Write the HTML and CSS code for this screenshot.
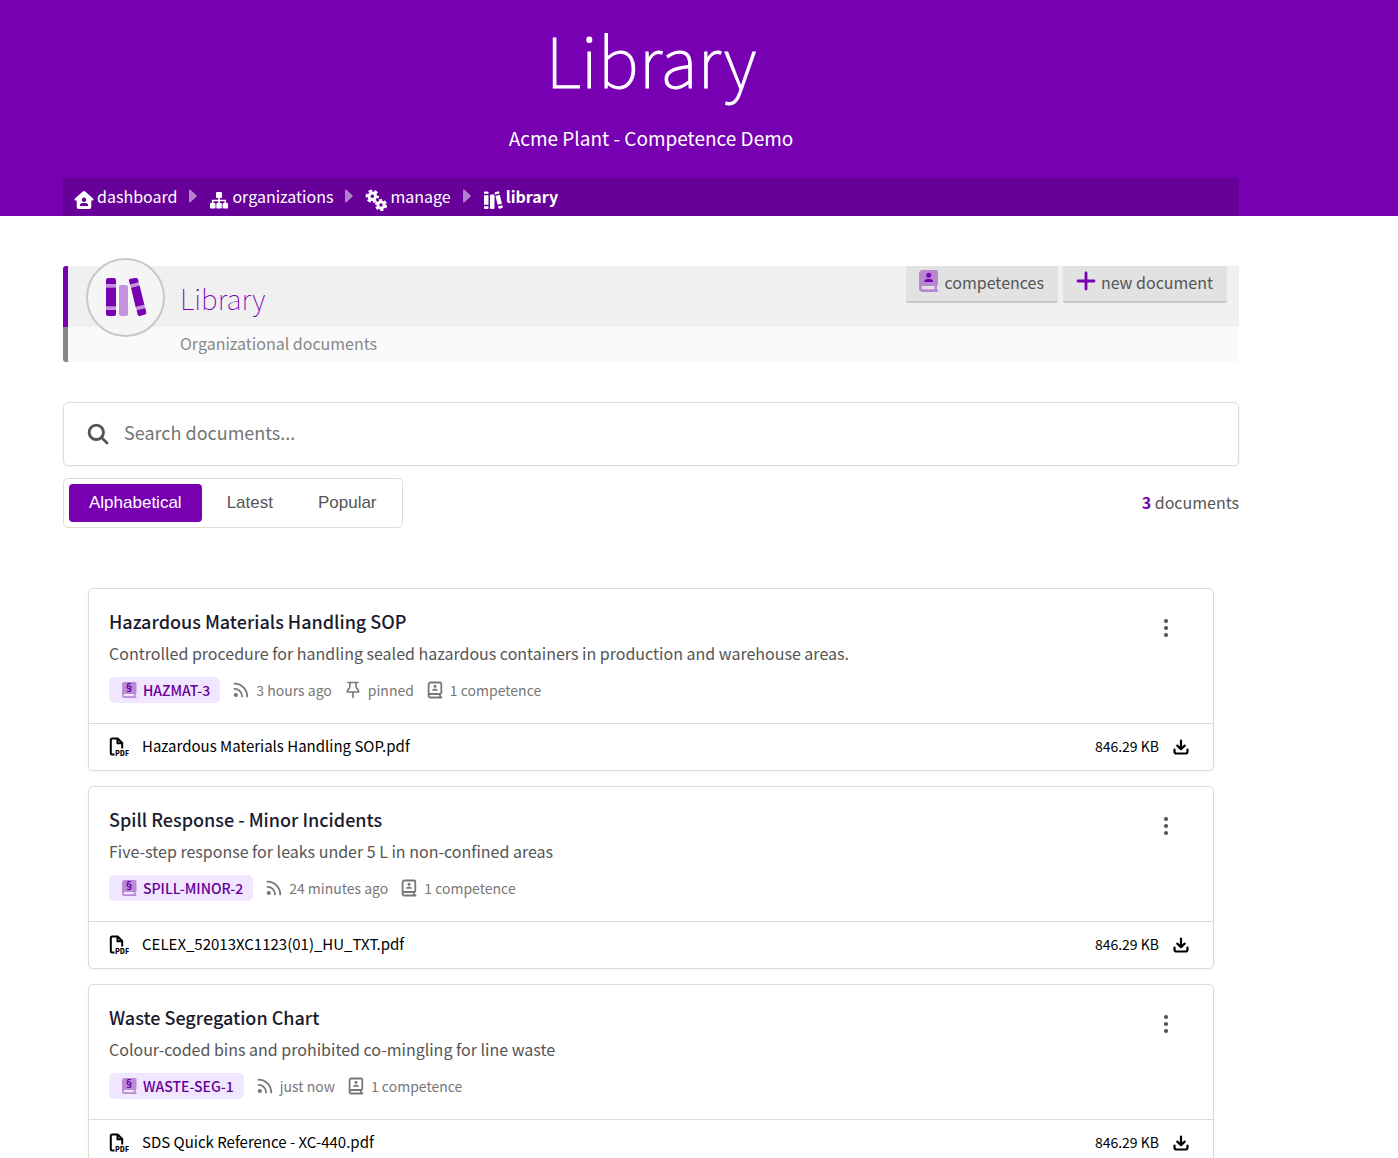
FILE: index.html
```html
<!DOCTYPE html>
<html lang="en">
<head>
    <meta charset="UTF-8">
    <meta name="viewport" content="width=device-width, initial-scale=1.0">
    <title>Library</title>
    <link rel="stylesheet" href="styles.css">
</head>
<body>
    <!-- Icon sprite -->
    <svg class="sprite" aria-hidden="true">
        <symbol id="i-home" viewBox="0 0 20 20">
            <path fill-rule="evenodd" d="M10 1 Q10.6 1 11.2 1.500L19.300 8.800Q19.800 9.400 19.300 10Q18.900 10.600 18 10.500H17.300V17Q17.300 19 15.300 19H4.700Q2.700 19 2.700 17V10.500H2Q1.100 10.600.7 10Q.2 9.400.7 8.800L8.800 1.500Q9.400 1 10 1ZM10 7.600A2.200 2.200 0 1 0 10 12A2.200 2.200 0 1 0 10 7.600ZM8.600 13A2.800 2.800 0 0 0 5.900 16H14.100A2.800 2.800 0 0 0 11.400 13Z"/>
        </symbol>
        <symbol id="i-sitemap" viewBox="0 0 20 20">
            <rect x="7" y="2" width="6" height="6" rx="1"/>
            <rect x="1" y="13" width="5.500" height="5.500" rx="1"/>
            <rect x="7.300" y="13" width="5.500" height="5.500" rx="1"/>
            <rect x="13.600" y="13" width="5.500" height="5.500" rx="1"/>
            <path d="M10 8V13M3.700 13V10.500H16.300V13" fill="none" stroke="currentColor" stroke-width="1.600"/>
        </symbol>
        <symbol id="i-gears" viewBox="0 0 22 22">
            <g fill="none" stroke="currentColor">
                <circle cx="7.300" cy="7.300" r="3.300" stroke-width="3"/>
                <circle cx="7.300" cy="7.300" r="5.400" stroke-width="2.600" stroke-dasharray="3.300 2.355" stroke-dashoffset="1.400"/>
                <circle cx="16" cy="16" r="3.100" stroke-width="2.800"/>
                <circle cx="16" cy="16" r="4.900" stroke-width="2.400" stroke-dasharray="3 2.131"/>
            </g>
        </symbol>
        <symbol id="i-books" viewBox="0 0 42 40">
            <path d="M1 2Q1 0 3 0H9Q11 0 11 2V6H1ZM1 9.500H11V28.500H1ZM1 32H11V36Q11 38 9 38H3Q1 38 1 36ZM24 2.700Q23.700 1.200 25.300.8L30.800-.2Q32.400-.4 32.900 1.200L33.700 4.200 25 6.500ZM26 9.800 34.600 7.600 39.400 26.800 30.600 29ZM31.600 32.300 40.200 30.100 41.200 34.200Q41.500 36 40 36.500L34.800 37.900Q33.200 38.200 32.700 36.700Z"/>
            <path class="soft" d="M1 6H11V9.500H1ZM1 28.500H11V32H1ZM25 6.500 33.700 4.200 34.600 7.600 26 9.800ZM30.600 29 39.400 26.800 40.200 30.100 31.600 32.300ZM16 7H21Q23 7 23 9V36Q23 38 21 38H16Q14 38 14 36V9Q14 7 16 7Z"/>
        </symbol>
        <symbol id="i-books-solid" viewBox="0 0 20 20">
            <path d="M1 2.500Q1 1.500 2 1.500H4.500Q5.500 1.500 5.500 2.500V3.700H1ZM1 5.200H5.500V14.800H1ZM1 16.300H5.500V18Q5.500 19 4.500 19H2Q1 19 1 18ZM8 4.500H10.500Q11.500 4.500 11.500 5.500V18Q11.500 19 10.500 19H8Q7 19 7 18V5.500Q7 4.500 8 4.500ZM11.700 3.200Q11.500 2.200 12.400 2L15 1.400Q15.900 1.200 16.200 2.100L16.500 3.400 12 4.500ZM12.400 5.900 16.800 4.800 19 13.700 14.700 14.800ZM15 16.300 19.400 15.200 19.800 16.900Q20 17.800 19.100 18.100L16.600 18.700Q15.700 18.900 15.400 18Z"/>
        </symbol>
        <symbol id="i-arrow" viewBox="0 0 8 14">
            <path d="M0 1.200Q0 0 1.200.6L7.400 6.200Q8 7 7.400 7.800L1.200 13.400Q0 14 0 12.800Z"/>
        </symbol>
        <symbol id="i-book-user" viewBox="0 0 20 22">
            <path class="soft" fill-rule="evenodd" d="M4 0H17Q19 0 19 2V14Q19 15.400 18 15.800V19.200Q19 19.300 19 20.500T18 22H4Q0 22 0 18V4Q0 0 4 0ZM4 16Q2.600 16 2.600 17.600T4 19.200H15.500V16Z"/>
            <circle cx="9.700" cy="5.300" r="2.500"/>
            <path d="M5.300 12Q5.500 8.900 8.500 8.900H11Q14 8.900 14.100 12Z"/>
        </symbol>
        <symbol id="i-book-section" viewBox="0 0 16 18">
            <path class="soft" fill-rule="evenodd" d="M3.500 1H14Q15.500 1 15.500 2.500V11.500Q15.500 12.800 14.700 13V15.200Q15.500 15.300 15.500 16.100T14.700 17H3.500Q1 17 1 14.500V3.500Q1 1 3.500 1ZM3.500 13Q2.500 13 2.500 14.100T3.500 15.200H12.700V13Z"/>
            <text x="8" y="10" text-anchor="middle" class="glyph-section">§</text>
        </symbol>
        <symbol id="i-plus" viewBox="0 0 20 20">
            <path d="M10 2V18M2 10H18" fill="none" stroke="currentColor" stroke-width="2.800" stroke-linecap="round"/>
        </symbol>
        <symbol id="i-search" viewBox="0 0 22 22">
            <g fill="none" stroke="currentColor" stroke-width="2.800">
                <circle cx="9.300" cy="9.300" r="7.200"/>
                <path d="M14.500 14.500 20 20" stroke-linecap="round"/>
            </g>
        </symbol>
        <symbol id="i-rss" viewBox="0 0 16 16">
            <circle cx="2.800" cy="13" r="2.100"/>
            <path d="M1.500 6.800A7.600 7.600 0 0 1 9.100 14.400M1.500 1.700A12.700 12.700 0 0 1 14.200 14.400" fill="none" stroke="currentColor" stroke-width="1.800" stroke-linecap="round"/>
        </symbol>
        <symbol id="i-pin" viewBox="0 0 14 18">
            <path d="M2 1.500H12M4.200 1.500 3.600 7Q1.400 8.300 1.200 11H12.800Q12.600 8.300 10.400 7L9.800 1.500M7 11V16.500" fill="none" stroke="currentColor" stroke-width="1.600" stroke-linecap="round" stroke-linejoin="round"/>
        </symbol>
        <symbol id="i-badge-book" viewBox="0 0 16 18">
            <path d="M3.500 1.500H13Q14.300 1.500 14.300 2.800V11.800Q14.300 13 13.300 13H3.500Q1.600 13 1.600 14.800T3.500 16.500H14.500M1.600 14.800V3.500Q1.600 1.500 3.500 1.500M13 13V16.500" fill="none" stroke="currentColor" stroke-width="1.800" stroke-linecap="round"/>
            <circle cx="8" cy="5.300" r="1.500"/>
            <path d="M5 9.800Q5.200 7.700 7.200 7.700H8.800Q10.800 7.700 11 9.800Z"/>
        </symbol>
        <symbol id="i-pdf" viewBox="0 0 20 20">
            <path d="M5.500 17.500H3.300Q1.800 17.500 1.800 16V3Q1.800 1.500 3.300 1.500H8.700L13.200 6V11.500M8.500 1.500V6.300H13.200" fill="none" stroke="currentColor" stroke-width="2"/>
            <text x="6" y="19" class="glyph-pdf">PDF</text>
        </symbol>
        <symbol id="i-download" viewBox="0 0 16 16">
            <path d="M8 1.500V9.800M4.300 6.600 8 10.200 11.700 6.600M1.500 10.500V12.500Q1.500 14.500 3.500 14.500H12.500Q14.500 14.500 14.500 12.500V10.500" fill="none" stroke="currentColor" stroke-width="2.200" stroke-linecap="round" stroke-linejoin="round"/>
        </symbol>
        <symbol id="i-dots" viewBox="0 0 6 20">
            <circle cx="3" cy="3" r="2.100"/>
            <circle cx="3" cy="10" r="2.100"/>
            <circle cx="3" cy="17" r="2.100"/>
        </symbol>
    </svg>

    <header class="hero">
        <div class="container">
            <h1>Library</h1>
            <p class="org">Acme Plant - Competence Demo</p>
            <nav class="breadcrumb" aria-label="Breadcrumb">
                <a href="#"><svg class="icon-20"><use href="#i-home"/></svg><span>dashboard</span></a>
                <svg class="arrow"><use href="#i-arrow"/></svg>
                <a href="#"><svg class="icon-20"><use href="#i-sitemap"/></svg><span>organizations</span></a>
                <svg class="arrow"><use href="#i-arrow"/></svg>
                <a href="#"><svg class="icon-22"><use href="#i-gears"/></svg><span>manage</span></a>
                <svg class="arrow"><use href="#i-arrow"/></svg>
                <a href="#" class="current"><svg class="icon-20"><use href="#i-books-solid"/></svg><span>library</span></a>
            </nav>
        </div>
    </header>

    <main class="container">
        <section class="banner">
            <div class="banner-icon"><svg><use href="#i-books"/></svg></div>
            <div class="banner-top">
                <h2>Library</h2>
                <div class="actions">
                    <button type="button"><svg class="book"><use href="#i-book-user"/></svg>competences</button>
                    <button type="button"><svg class="icon-20"><use href="#i-plus"/></svg>new document</button>
                </div>
            </div>
            <p class="banner-sub">Organizational documents</p>
        </section>

        <label class="search">
            <svg><use href="#i-search"/></svg>
            <input type="search" placeholder="Search documents..." aria-label="Search documents">
        </label>

        <div class="toolbar">
            <div class="sort">
                <button type="button" class="active">Alphabetical</button>
                <button type="button">Latest</button>
                <button type="button">Popular</button>
            </div>
            <p class="count"><strong>3</strong> documents</p>
        </div>

        <div class="documents">
            <article class="card">
                <div class="card-body">
                    <div>
                        <h3>Hazardous Materials Handling SOP</h3>
                        <p class="desc">Controlled procedure for handling sealed hazardous containers in production and warehouse areas.</p>
                        <div class="meta">
                            <span class="code"><svg><use href="#i-book-section"/></svg>HAZMAT-3</span>
                            <span class="item"><svg><use href="#i-rss"/></svg>3 hours ago</span>
                            <span class="item"><svg><use href="#i-pin"/></svg>pinned</span>
                            <span class="item"><svg><use href="#i-badge-book"/></svg>1 competence</span>
                        </div>
                    </div>
                    <button type="button" class="menu" aria-label="Options"><svg><use href="#i-dots"/></svg></button>
                </div>
                <a href="#" class="file">
                    <svg class="icon-20"><use href="#i-pdf"/></svg>
                    <span class="name">Hazardous Materials Handling SOP.pdf</span>
                    <span class="size">846.29 KB</span>
                    <svg class="download"><use href="#i-download"/></svg>
                </a>
            </article>

            <article class="card">
                <div class="card-body">
                    <div>
                        <h3>Spill Response - Minor Incidents</h3>
                        <p class="desc">Five-step response for leaks under 5 L in non-confined areas</p>
                        <div class="meta">
                            <span class="code"><svg><use href="#i-book-section"/></svg>SPILL-MINOR-2</span>
                            <span class="item"><svg><use href="#i-rss"/></svg>24 minutes ago</span>
                            <span class="item"><svg><use href="#i-badge-book"/></svg>1 competence</span>
                        </div>
                    </div>
                    <button type="button" class="menu" aria-label="Options"><svg><use href="#i-dots"/></svg></button>
                </div>
                <a href="#" class="file">
                    <svg class="icon-20"><use href="#i-pdf"/></svg>
                    <span class="name">CELEX_52013XC1123(01)_HU_TXT.pdf</span>
                    <span class="size">846.29 KB</span>
                    <svg class="download"><use href="#i-download"/></svg>
                </a>
            </article>

            <article class="card">
                <div class="card-body">
                    <div>
                        <h3>Waste Segregation Chart</h3>
                        <p class="desc">Colour-coded bins and prohibited co-mingling for line waste</p>
                        <div class="meta">
                            <span class="code"><svg><use href="#i-book-section"/></svg>WASTE-SEG-1</span>
                            <span class="item"><svg><use href="#i-rss"/></svg>just now</span>
                            <span class="item"><svg><use href="#i-badge-book"/></svg>1 competence</span>
                        </div>
                    </div>
                    <button type="button" class="menu" aria-label="Options"><svg><use href="#i-dots"/></svg></button>
                </div>
                <a href="#" class="file">
                    <svg class="icon-20"><use href="#i-pdf"/></svg>
                    <span class="name">SDS Quick Reference - XC-440.pdf</span>
                    <span class="size">846.29 KB</span>
                    <svg class="download"><use href="#i-download"/></svg>
                </a>
            </article>
        </div>
    </main>
</body>
</html>
```
FILE: styles.css
```css
* {
    box-sizing: border-box;
}
body {
    margin: 0;
    background-color: #fff;
    color: #555;
    font-family: "Source Sans Pro", "Noto Sans CJK SC", sans-serif;
    font-size: 16px;
    line-height: 24px;
}
h1, h2, h3, p {
    margin: 0;
}
a {
    color: inherit;
    text-decoration: none;
}
svg {
    fill: currentColor;
    flex-shrink: 0;
}
button {
    border: none;
    cursor: pointer;
}
.sprite {
    display: none;
}
.soft {
    opacity: 0.4;
}
.glyph-section {
    font-size: 10px;
    font-weight: 700;
}
.glyph-pdf {
    font-size: 7px;
    font-weight: 900;
}
.icon-20 {
    width: 20px;
    height: 20px;
}
.icon-22 {
    width: 22px;
    height: 22px;
}
.container {
    margin-right: 96px;
    padding: 0 63px;
}

/* Header */
.hero {
    background-color: #7700b3;
    color: #fff;
    text-align: center;
}
.hero h1 {
    padding-top: 10px;
    font-size: 69px;
    font-weight: 100;
    line-height: 96px;
    -webkit-text-stroke: 1px #fff;
}
.org {
    padding: 17px 0 25px;
    font-size: 19px;
    font-weight: 400;
    line-height: 30px;
}
.breadcrumb {
    display: flex;
    align-items: center;
    gap: 12px;
    height: 38px;
    padding: 0 11px;
    background-color: #660099;
    border-radius: 3px 3px 0 0;
}
.breadcrumb a {
    display: flex;
    align-items: center;
    gap: 3px;
}
.breadcrumb a svg {
    margin-top: 6px;
}
.breadcrumb span {
    padding-bottom: 2px;
}
.breadcrumb .current {
    font-weight: 700;
}
.arrow {
    width: 8px;
    height: 14px;
    margin-bottom: 2px;
    opacity: 0.5;
}

/* Page banner */
.banner {
    position: relative;
    margin-top: 50px;
}
.banner-top {
    display: flex;
    justify-content: space-between;
    height: 61px;
    padding: 0 12px 0 112px;
    background-color: #f0f0f0;
    border-left: 5px solid #7700b3;
    border-radius: 3px 0 0 0;
}
.banner h2 {
    padding-top: 14px;
    color: #7700b3;
    font-size: 28px;
    font-weight: 100;
    line-height: 36px;
}
.banner-icon {
    position: absolute;
    left: 23px;
    top: -8px;
    display: flex;
    align-items: center;
    justify-content: center;
    width: 79px;
    height: 79px;
    border: 2px solid #c8c8c8;
    border-radius: 50%;
    background-color: #f5f5f5;
    color: #7700b3;
}
.banner-icon svg {
    width: 42px;
    height: 40px;
}
.banner-sub {
    padding: 4px 0 7px 112px;
    background-color: #fafafa;
    border-left: 5px solid #888;
    border-radius: 0 0 0 3px;
    color: #888;
}
.actions {
    display: flex;
    align-items: flex-start;
    gap: 5px;
}
.actions button {
    display: flex;
    align-items: center;
    gap: 5px;
    height: 37px;
    padding: 0 14px 3px 13px;
    background-color: #e2e2e2;
    border-bottom: 2px solid #c8c8c8;
    border-radius: 0 0 2px 2px;
    color: #555;
    font: inherit;
}
.actions svg {
    color: #7700b3;
    margin-bottom: 2px;
}
.book {
    width: 20px;
    height: 22px;
}

/* Search and sorting */
.search {
    display: flex;
    align-items: center;
    gap: 15px;
    height: 64px;
    margin-top: 40px;
    padding: 0 23px;
    border: 1px solid #dedbd0;
    border-radius: 5px;
    box-shadow: 0 1px 3px rgba(0, 0, 0, 0.05);
}
.search svg {
    width: 22px;
    height: 22px;
}
.search input {
    flex: 1;
    padding: 0 0 4px;
    border: none;
    outline: none;
    background: none;
    color: #333;
    font: inherit;
    font-size: 18px;
}
.search input::placeholder {
    color: #757575;
}
.toolbar {
    display: flex;
    align-items: center;
    justify-content: space-between;
    margin-top: 12px;
}
.sort {
    display: flex;
    gap: 5px;
    padding: 5px;
    border: 1px solid #dedbd0;
    border-radius: 5px;
}
.sort button {
    height: 38px;
    padding: 0 20px;
    background: none;
    border-radius: 4px;
    color: #555;
    font-family: "Liberation Sans", Arial, sans-serif;
    font-size: 17px;
}
.sort .active {
    background-color: #7700b3;
    color: #fff;
}
.count {
    padding-bottom: 2px;
}
.count strong {
    color: #7700b3;
}

/* Documents */
.documents {
    display: flex;
    flex-direction: column;
    gap: 15px;
    padding: 60px 25px;
}
.card {
    border: 1px solid #dedbd0;
    border-radius: 5px;
    box-shadow: 0 1px 3px rgba(0, 0, 0, 0.05);
}
.card-body {
    display: flex;
    justify-content: space-between;
    padding: 20px 27px 20px 20px;
    border-bottom: 1px solid #dedbd0;
}
.card h3 {
    margin-bottom: 8px;
    color: #1a1a2e;
    font-size: 18px;
    font-weight: 500;
    line-height: 24px;
}
.meta {
    display: flex;
    align-items: center;
    gap: 13px;
    margin-top: 12px;
    color: #777;
    font-size: 14px;
}
.code, .item {
    display: flex;
    align-items: center;
    gap: 7px;
}
.code {
    gap: 6px;
    height: 26px;
    padding: 0 10px 0 12px;
    background-color: #f0e6ff;
    border-radius: 5px;
    color: #660099;
    font-weight: 500;
}
.meta svg {
    width: 16px;
    height: 18px;
}
.menu {
    width: 40px;
    height: 40px;
    padding: 0;
    background: none;
    color: #555;
}
.menu svg {
    width: 6px;
    height: 20px;
}
.file {
    display: flex;
    align-items: center;
    height: 46px;
    padding: 0 24px 0 20px;
    color: #000;
    font-size: 15px;
}
.name {
    flex: 1;
    margin-left: 13px;
    padding-bottom: 2px;
}
.size {
    margin-right: 14px;
    padding-bottom: 2px;
    font-size: 14px;
}
.download {
    width: 16px;
    height: 16px;
}
```
